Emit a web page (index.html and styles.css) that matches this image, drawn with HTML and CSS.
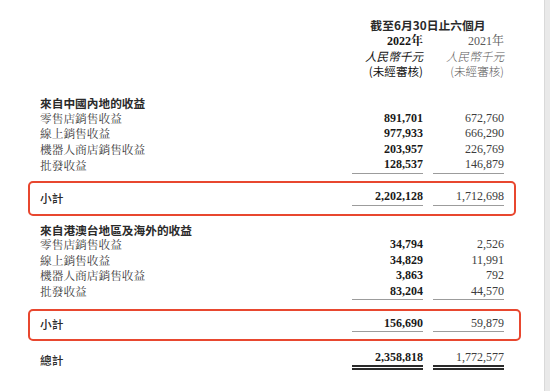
FILE: index.html
```html
<!DOCTYPE html>
<html lang="zh-Hant">
<head>
<meta charset="utf-8">
<title>收益</title>
<link rel="stylesheet" href="styles.css">
</head>
<body>
<div class="page">
  <main class="sheet">
    <div class="head">
      <div class="row head-title"><span></span><span class="span2">截至6月30日止六個月</span></div>
      <div class="row head-year"><span></span><span class="c1 b">2022年</span><span class="c2">2021年</span></div>
      <div class="row head-unit"><span></span><span class="c1 b">人民幣千元</span><span class="c2">人民幣千元</span></div>
      <div class="row head-audit"><span></span><span class="c1 b">(未經審核)</span><span class="c2">(未經審核)</span></div>
    </div>

    <section class="group g1">
      <div class="row heading"><span class="lbl">來自中國內地的收益</span></div>
      <div class="row"><span class="lbl">零售店銷售收益</span><span class="num b">891,701</span><span class="num">672,760</span></div>
      <div class="row"><span class="lbl">線上銷售收益</span><span class="num b">977,933</span><span class="num">666,290</span></div>
      <div class="row"><span class="lbl">機器人商店銷售收益</span><span class="num b">203,957</span><span class="num">226,769</span></div>
      <div class="row last"><span class="lbl">批發收益</span><span class="num b">128,537</span><span class="num">146,879</span></div>
    </section>

    <div class="mark m1">
      <div class="row sub"><span class="lbl">小計</span><span class="num b">2,202,128</span><span class="num">1,712,698</span></div>
    </div>

    <section class="group g2">
      <div class="row heading"><span class="lbl">來自港澳台地區及海外的收益</span></div>
      <div class="row"><span class="lbl">零售店銷售收益</span><span class="num b">34,794</span><span class="num">2,526</span></div>
      <div class="row"><span class="lbl">線上銷售收益</span><span class="num b">34,829</span><span class="num">11,991</span></div>
      <div class="row"><span class="lbl">機器人商店銷售收益</span><span class="num b">3,863</span><span class="num">792</span></div>
      <div class="row last"><span class="lbl">批發收益</span><span class="num b">83,204</span><span class="num">44,570</span></div>
    </section>

    <div class="mark m2">
      <div class="row sub"><span class="lbl">小計</span><span class="num b">156,690</span><span class="num">59,879</span></div>
    </div>

    <div class="row total"><span class="lbl">總計</span><span class="num b">2,358,818</span><span class="num">1,772,577</span></div>
  </main>
  <div class="scroll"></div>
</div>
</body>
</html>
```

FILE: styles.css
```css
html, body {
  margin: 0;
  padding: 0;
  background: #ffffff;
}
body {
  width: 550px;
  height: 391px;
  overflow: hidden;
  font-family: "Noto Sans CJK TC", "Noto Sans", sans-serif;
  color: #2a2a2a;
}
.page {
  display: flex;
  height: 391px;
}
.sheet {
  flex: 1;
  padding: 0 40px 0 40px;
}
.scroll {
  width: 5px;
  background: #e9e9e9;
  border-left: 1px solid #d9d9d9;
}
.row {
  display: grid;
  grid-template-columns: 1fr 71px 71px;
  column-gap: 10px;
  height: 15.5px;
  line-height: 15.5px;
  align-items: center;
}
.lbl {
  font-family: "Noto Serif CJK TC", "Noto Sans CJK TC", serif;
  font-size: 11.7px;
  color: #3a3a3a;
  white-space: nowrap;
}
.heading .lbl,
.sub .lbl,
.total .lbl {
  font-family: "Noto Sans CJK TC", sans-serif;
  font-weight: 700;
  color: #2a2a2a;
}
.sub .lbl,
.total .lbl {
  font-weight: 500;
}
.num {
  font-family: "Liberation Serif", "Noto Serif CJK TC", serif;
  font-size: 12px;
  text-align: right;
  color: #3c3c3c;
}
.num.b {
  font-weight: 700;
  color: #1a1a1a;
}

/* header */
.head {
  padding-top: 16px;
}
.head .row { line-height: 15px; height: 15px; }
.head-title { height: 17px !important; line-height: 17px !important; }
.span2 {
  grid-column: 2 / 4;
  text-align: center;
  font-family: "Noto Sans CJK TC", sans-serif;
  font-weight: 700;
  font-size: 11.8px;
  color: #2a2a2a;
  white-space: nowrap;
}
.head-year { margin-top: 1px; }
.head-audit { height: 14px !important; line-height: 14px !important; }
.head .c1, .head .c2 {
  text-align: right;
  white-space: nowrap;
  font-size: 11.6px;
}
.head-year .c1, .head-year .c2 {
  font-family: "Liberation Serif", "Noto Serif CJK TC", "Noto Sans CJK TC", serif;
  font-size: 12px;
}
.head-unit .c1, .head-unit .c2 {
  font-family: "Noto Sans CJK TC", sans-serif;
  font-style: italic;
}
.head-audit .c1, .head-audit .c2 {
  font-family: "Noto Sans CJK TC", sans-serif;
}
.head .c1 { color: #151515; }
.head .c1.b { font-weight: 400; }
.head-year .c1.b { font-weight: 700; }
.head .c2 { color: #5a5a5a; font-weight: 300; }
.head-year .c2 { font-weight: 400; }

/* groups */
.g1 { margin-top: 17.25px; }
.g2 { margin-top: 6.25px; }
.last .num {
  border-bottom: 1.5px solid #9c9c9c;
}

/* red annotation boxes */
.mark {
  border: 2px solid #e8472f;
  border-radius: 5px;
  margin-left: -12px;
  padding-left: 10px;
  padding-right: 10px;
}
.m1 {
  margin-top: 7.75px;
  margin-right: -12px;
  padding-top: 6.5px;
  padding-bottom: 9px;
}
.m2 {
  margin-top: 10px;
  margin-right: -17px;
  padding-right: 15px;
  padding-top: 4.5px;
  padding-bottom: 8px;
}
.sub .num {
  border-bottom: 1.5px solid #9c9c9c;
}

/* total */
.total {
  margin-top: 8.5px;
}
.total .num {
  border-bottom: 5px double #2a2a2a;
}
```
